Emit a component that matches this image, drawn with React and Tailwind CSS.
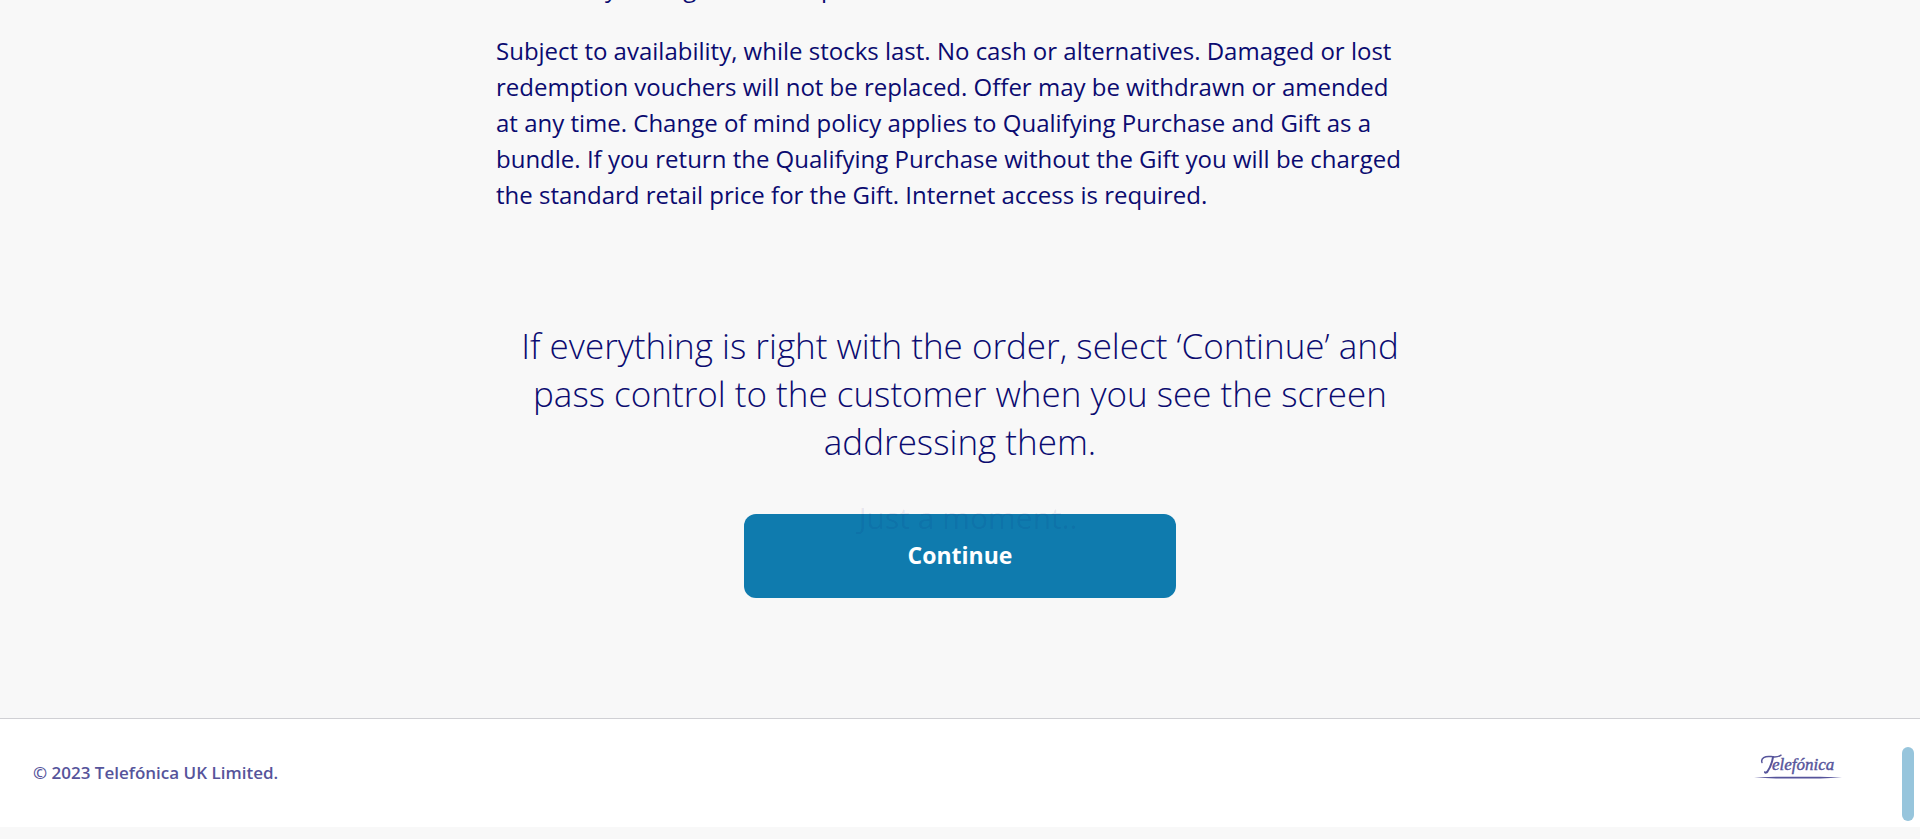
function TelefonicaLogo() {
  return (
    <svg viewBox="0 0 88 28" className="mb-3 h-7 w-[88px]" role="img" aria-label="Telefónica">
      <g fill="none" stroke="#56549b" strokeLinecap="round">
        <path d="M8 9.500C6.500 5.500 11 2.600 17 3.600C21 4.300 24 4.200 27 2.200" strokeWidth="1.500" />
        <path d="M19 4.200C18 10 16 15 13.500 18.500C12.500 19.700 11.500 20 11 19.200" strokeWidth="2" />
      </g>
      <text x="18" y="17" fill="#56549b" fontSize="17" fontStyle="italic" stroke="#56549b" strokeWidth="0.400" fontFamily="'Liberation Serif', serif">elefónica</text>
      <path d="M0 24.500L22 23.700H66L88 24.500L66 25.400H22Z" fill="#56549b" />
    </svg>
  );
}

export default function App() {
  return (
    <div className="relative flex min-h-screen flex-col overflow-hidden bg-[#f8f8f8] font-['Open_Sans','Noto_Sans',sans-serif] text-[#0b0b70]">
      <main className="mx-auto -mt-[30px] flex w-full max-w-[928px] flex-col">
        <p className="text-2xl leading-9">All delivery during the stores period.</p>
        <p className="mt-[27px] text-2xl leading-9">
          Subject to availability, while stocks last. No cash or alternatives. Damaged or lost<br />
          redemption vouchers will not be replaced. Offer may be withdrawn or amended<br />
          at any time. Change of mind policy applies to Qualifying Purchase and Gift as a<br />
          bundle. If you return the Qualifying Purchase without the Gift you will be charged<br />
          the standard retail price for the Gift. Internet access is required.
        </p>
        <h2 className="mt-[109px] text-center text-[35px] leading-[48px] font-light">
          If everything is right with the order, select ‘Continue’ and<br />
          pass control to the customer when you see the screen<br />
          addressing them.
        </h2>
        <div className="relative mt-12 flex justify-center">
          <button type="button" className="h-[84px] w-[432px] rounded-xl bg-[#0f7bae] pb-0.5 text-[23px] font-bold text-white">Continue</button>
          <p className="pointer-events-none absolute inset-x-0 -top-5 pl-4 text-center text-3xl leading-[48px] text-[#000066]/8">Just a moment..</p>
        </div>
      </main>
      <footer className="mt-[120px] mb-3 flex h-[109px] items-center justify-between border-t border-[#d0d0d4] bg-white pr-[78px] pl-[33px] text-[#56549b]">
        <p className="text-[17px] font-semibold">© 2023 Telefónica UK Limited.</p>
        <TelefonicaLogo />
      </footer>
      <div className="absolute right-[6px] bottom-[18px] h-[74px] w-3 rounded-full bg-[#97c5dc]" />
    </div>
  );
}
